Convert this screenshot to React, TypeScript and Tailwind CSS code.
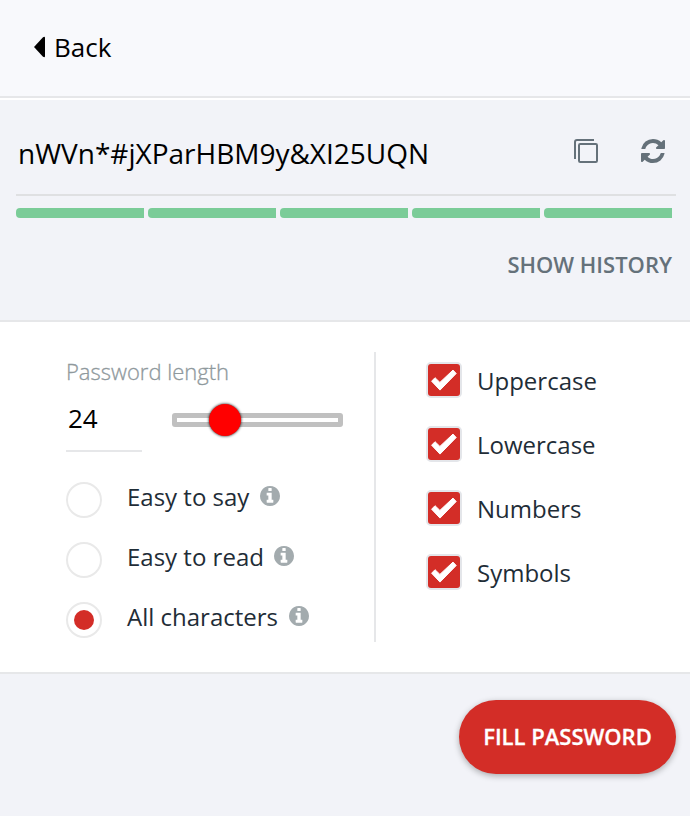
import { useState } from "react";

const RADIOS = ["Easy to say", "Easy to read", "All characters"];
const CHECKS = ["Uppercase", "Lowercase", "Numbers", "Symbols"];

function CopyIcon() {
  return (
    <svg width="24" height="24" viewBox="0 0 24 24" fill="none" stroke="#65717a" strokeWidth="2">
      <path d="M20 1H3Q1 1 1 3v17" />
      <rect x="5" y="5" width="18" height="18" rx="1.2" />
    </svg>
  );
}

function RefreshIcon() {
  return (
    <svg width="24" height="24" viewBox="0 128 1536 1536" fill="#65717a">
      <path d="M1511 1056q0 5-1 7-64 268-268 434.5t-478 166.5q-146 0-282.5-55t-243.5-157l-129 129q-19 19-45 19t-45-19-19-45v-448q0-26 19-45t45-19h448q26 0 45 19t19 45-19 45l-137 137q71 66 161 102t187 36q134 0 250-65t186-179q11-17 53-117 8-23 30-23h192q13 0 22.5 9.5t9.5 22.5zm25-800v448q0 26-19 45t-45 19h-448q-26 0-45-19t-19-45 19-45l138-138q-148-137-349-137-134 0-250 65t-186 179q-11 17-53 117-8 23-30 23h-199q-13 0-22.5-9.5t-9.5-22.5v-7q65-268 270-434.5t480-166.5q146 0 284 55.5t245 156.5l130-129q19-19 45-19t45 19 19 45z" />
    </svg>
  );
}

function InfoIcon() {
  return (
    <svg width="20" height="20" viewBox="0 128 1536 1536" fill="#a3abae">
      <path d="M1024 1376v-160q0-14-9-23t-23-9h-96v-512q0-14-9-23t-23-9h-320q-14 0-23 9t-9 23v160q0 14 9 23t23 9h96v320h-96q-14 0-23 9t-9 23v160q0 14 9 23t23 9h448q14 0 23-9t9-23zm-128-896v-160q0-14-9-23t-23-9h-192q-14 0-23 9t-9 23v160q0 14 9 23t23 9h192q14 0 23-9t9-23zm640 416q0 209-103 385.5t-279.5 279.5-385.5 103-385.5-103-279.5-279.5-103-385.5 103-385.5 279.5-279.5 385.5-103 385.5 103 279.5 279.5 103 385.5z" />
    </svg>
  );
}

function TickIcon() {
  return (
    <svg width="32" height="32" viewBox="0 0 32 32" fill="#fff" stroke="#fff" strokeWidth="1" strokeLinejoin="round">
      <path d="M3.6 17.2 7 13.7l4.9 4.7L25 6.1l3.2 3.4L12 26.1z" />
    </svg>
  );
}

export default function App() {
  const [mode, setMode] = useState(2);
  return (
    <div className="flex h-[816px] w-[690px] flex-col overflow-hidden bg-[#f2f3f8] font-['Open_Sans',sans-serif] whitespace-nowrap text-black">
      <header className="flex h-[100px] shrink-0 flex-col bg-white">
        <div className="flex h-[98px] items-center border-b-2 border-[#e6e7e9] bg-[#f8f9fc] pb-[2px] pl-[34px]">
          <svg width="12" height="22" viewBox="0 0 12 22">
            <path d="M0 11 9 1.2Q11 0 11 2v18q0 2-2 .8z" />
          </svg>
          <span className="ml-2 text-[26px] leading-9">Back</span>
        </div>
      </header>

      <section className="flex h-[222px] shrink-0 flex-col border-b-2 border-[#e6e7e9] pl-4">
        <div className="flex h-[96px] w-[660px] items-center border-b-2 border-[#dfe0e2] pt-[12px] pr-[11px] pl-[2px]">
          <span className="flex-1 text-[28px] leading-10">nWVn*#jXParHBM9y&amp;XI25UQN</span>
          <button className="mb-1 mr-[43px]"><CopyIcon /></button>
          <button className="mb-1"><RefreshIcon /></button>
        </div>
        <div className="mt-3 flex gap-1">
          {[0, 1, 2, 3, 4].map((i) => (
            <div key={i} className="h-[10px] w-32 rounded-l-[4px] bg-[#7bcc98]" />
          ))}
        </div>
        <div className="mt-[31px] flex justify-end pr-[18px]">
          <button className="text-[22px] leading-[30px] font-semibold text-[#65717a]">SHOW HISTORY</button>
        </div>
      </section>

      <section className="flex h-[352px] shrink-0 border-b-2 border-[#e6e7e9] bg-white pt-[30px] pl-[66px] text-[24px] text-[#1f2d37]">
        <div className="flex h-[290px] w-[310px] flex-col border-r-2 border-[#e6e7e9]">
          <div className="h-9 pt-[3px] text-[22px] leading-8 font-light text-[#8f999d] [-webkit-text-stroke:0.3px_#8f999d]">Password length</div>
          <div className="flex h-16">
            <div className="h-16 w-[76px] border-b-2 border-[#e6e7e9] pt-[12px] pl-[2px] text-[26px] leading-9 text-black">24</div>
            <div className="relative mt-[25px] ml-[30px] h-[14px] w-[171px] rounded-[3px] border-[5px] border-[#c0c0c0] bg-white">
              <div className="absolute top-[-14px] left-[32px] size-8 rounded-full bg-[#ff0000] shadow-[0_0_3px_#000]" />
            </div>
          </div>
          <div className="mt-[30px] flex flex-col gap-6">
            {RADIOS.map((label, i) => (
              <label key={label} className="flex h-9 items-center" onClick={() => setMode(i)}>
                <span className="flex size-9 items-center justify-center rounded-full border-2 border-[#e9e9e9]">
                  {mode === i && <span className="size-5 rounded-full bg-[#d32d27]" />}
                </span>
                <span className="mb-[6px] ml-[25px] leading-8">{label}</span>
                <span className="mb-[8px] ml-[10.5px]"><InfoIcon /></span>
              </label>
            ))}
          </div>
        </div>
        <div className="flex flex-col gap-7 pt-[10px] pl-[50px]">
          {CHECKS.map((label) => (
            <label key={label} className="flex h-9 items-center">
              <span className="size-9 rounded-[5px] border-2 border-[#e4e6ea] bg-[#e4e6ea]">
                <span className="block size-8 rounded-[3px] bg-[#d32d27]"><TickIcon /></span>
              </span>
              <span className="mt-[2px] ml-[15px] leading-8">{label}</span>
            </label>
          ))}
        </div>
      </section>

      <footer className="flex flex-1 items-start justify-end pt-[26px] pr-[14px]">
        <button className="h-[74px] w-[217px] rounded-full bg-[#d32d27] pb-[2px] text-[22px] font-semibold text-white shadow-[0_2px_6px_rgba(0,0,0,0.3)] [-webkit-text-stroke:0.3px_#fff]">
          FILL PASSWORD
        </button>
      </footer>
    </div>
  );
}
